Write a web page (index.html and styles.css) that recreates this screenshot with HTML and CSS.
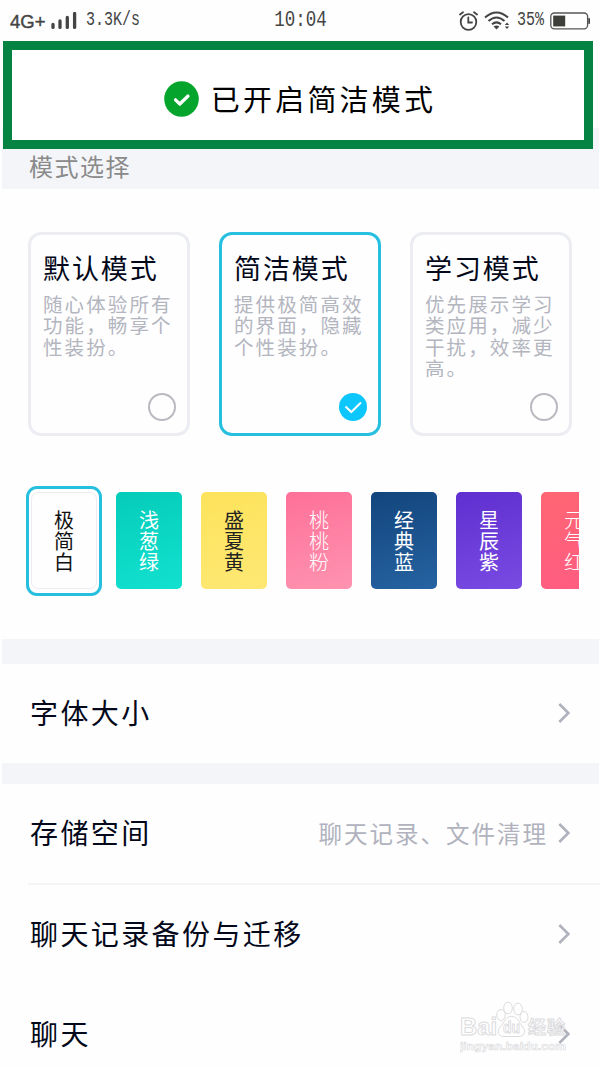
FILE: index.html
```html
<!DOCTYPE html>
<html lang="zh-CN">
<head>
  <meta charset="UTF-8" />
  <meta name="viewport" content="width=device-width, initial-scale=1.0"/>
  <title>简洁模式</title>
  <link rel="stylesheet" href="styles.css">
</head>
<body>

  <header class="status">
    <div class="status-left">
      <span class="network">4G+</span>
      <svg class="signal" width="26" height="18" viewBox="0 0 26 18" fill="none" stroke="#444" stroke-width="3.3" stroke-linecap="round">
        <path d="M2 12.5V15.4M9 9V15.4M16.3 5.5V15.4M23.6 1.5V15.4"/>
      </svg>
      <span class="mono speed">3.3K/s</span>
    </div>
    <span class="mono clock">10:04</span>
    <div class="status-right">
      <svg width="19" height="20" viewBox="0 0 19 20" fill="none" stroke="#444" stroke-width="1.8" stroke-linecap="round">
        <circle cx="9.5" cy="11" r="7.8"/>
        <path d="M9.3 6.5V11.5H13M1 3.5L4 1.2M18 3.5L15 1.2"/>
      </svg>
      <svg class="wifi" width="26" height="19" viewBox="0 0 26 19" fill="none" stroke="#444" stroke-width="2.1">
        <path d="M1 6.5Q12.5-3.5 24 6.5M4.5 10Q12.5 3 20.5 10M8 13.2Q12.5 9.5 17 13.2"/>
        <path d="M9.6 15.6Q12.5 13.4 15.4 15.6L12.5 18.6Z" fill="#444" stroke="none"/>
        <path d="M20.8 14L23 11.4L25.2 14ZM20.8 15.5L23 18.1L25.2 15.5Z" fill="#444" stroke="none"/>
      </svg>
      <span class="mono percent">35%</span>
      <svg class="battery" width="41" height="18" viewBox="0 0 41 18">
        <rect x=".8" y="1" width="36.8" height="15.8" rx="3.5" fill="none" stroke="#555" stroke-width="1.3"/>
        <rect x="3.2" y="3.6" width="12" height="10.8" fill="#3e3e3a"/>
        <path d="M38.3 6H39Q40 6 40 7V11Q40 12 39 12H38.3Z" fill="#444"/>
      </svg>
    </div>
  </header>

  <div class="banner">
    <svg width="35" height="36" viewBox="0 0 35 36">
      <ellipse cx="17.5" cy="18" rx="17.3" ry="17.8" fill="#05a52d"/>
      <path d="M11.5 18.8L15.8 23L24 15" fill="none" stroke="#fff" stroke-width="3.2" stroke-linecap="round" stroke-linejoin="round"/>
    </svg>
    <span>已开启简洁模式</span>
  </div>

  <h2 class="section-title">模式选择</h2>

  <section class="modes">
    <div class="mode">
      <h3>默认模式</h3>
      <p>随心体验所有功能，畅享个性装扮。</p>
      <span class="radio"></span>
    </div>
    <div class="mode active">
      <h3>简洁模式</h3>
      <p>提供极简高效的界面，隐藏个性装扮。</p>
      <span class="radio">
        <svg width="28" height="28" viewBox="0 0 28 28" fill="none" stroke="#fff" stroke-width="2">
          <path d="M6.5 13.5L12.3 19L22 9.5"/>
        </svg>
      </span>
    </div>
    <div class="mode">
      <h3>学习模式</h3>
      <p>优先展示学习类应用，减少干扰，效率更高。</p>
      <span class="radio"></span>
    </div>
  </section>

  <section class="themes">
    <div class="theme white"><span>极简白</span></div>
    <div class="theme green"><span>浅葱绿</span></div>
    <div class="theme yellow"><span>盛夏黄</span></div>
    <div class="theme pink"><span>桃桃粉</span></div>
    <div class="theme blue"><span>经典蓝</span></div>
    <div class="theme purple"><span>星辰紫</span></div>
    <div class="theme red"><span>元气红</span></div>
  </section>

  <div class="divider"></div>

  <div class="row">
    <span class="label">字体大小</span>
    <svg class="arrow" width="12" height="20" viewBox="0 0 12 20"><path d="M1.3 1L10.3 10L1.3 19"/></svg>
  </div>

  <div class="divider small"></div>

  <div class="row line">
    <span class="label">存储空间</span>
    <span class="value">聊天记录、文件清理</span>
    <svg class="arrow" width="12" height="20" viewBox="0 0 12 20"><path d="M1.3 1L10.3 10L1.3 19"/></svg>
  </div>
  <div class="row">
    <span class="label">聊天记录备份与迁移</span>
    <svg class="arrow" width="12" height="20" viewBox="0 0 12 20"><path d="M1.3 1L10.3 10L1.3 19"/></svg>
  </div>
  <div class="row">
    <span class="label">聊天</span>
    <svg class="arrow" width="12" height="20" viewBox="0 0 12 20"><path d="M1.3 1L10.3 10L1.3 19"/></svg>
  </div>

  <svg class="watermark" width="112" height="56" viewBox="0 0 112 56">
    <g fill="#fff" stroke="#dcdcde" stroke-width="1">
      <text class="wm-name" x="0" y="34" textLength="37" lengthAdjust="spacingAndGlyphs">Bai</text>
      <ellipse cx="41" cy="14" rx="4.3" ry="5.5"/>
      <ellipse cx="48" cy="7" rx="4.3" ry="5.8"/>
      <ellipse cx="58" cy="8" rx="4.3" ry="5.8"/>
      <ellipse cx="64" cy="16" rx="4" ry="5.5"/>
      <path d="M51.5 15.5C58 15.5 58.500 21 62 25C67 30 64 36 58 35.500H45C38 36 36 30 41 25C45 21 45 15.500 51.500 15.500Z"/>
      <text class="wm-du" x="43" y="32" textLength="17" lengthAdjust="spacingAndGlyphs">du</text>
      <text class="wm-cn" x="68" y="32.500" textLength="37">经验</text>
      <text class="wm-url" x="0" y="49" textLength="106" lengthAdjust="spacingAndGlyphs">jingyan.baidu.com</text>
    </g>
  </svg>

</body>
</html>
```

FILE: styles.css
```css
* {
  box-sizing: border-box;
}
body {
  font-family: "Noto Sans CJK SC", sans-serif;
  background: #fefefe;
  color: #03081a;
  margin: 0;
  position: relative;
  height: 1066px;
  overflow: hidden;
}
svg {
  display: block;
  flex: none;
}
.status {
  display: grid;
  grid-template-columns: 1fr auto 1fr;
  align-items: center;
  height: 41px;
  padding: 0 9px 0 10px;
  color: #444;
}
.status-left,
.status-right {
  display: flex;
  align-items: center;
}
.status-right {
  justify-content: flex-end;
}
.network {
  font: 18.5px "Liberation Sans", sans-serif;
  -webkit-text-stroke: 0.4px #444;
  width: 41px;
  padding-top: 3px;
}
.mono {
  font-family: "Liberation Mono", monospace;
  line-height: 20px;
  transform: scaleY(1.3);
}
.speed {
  font-size: 15px;
  margin-left: 9px;
}
.clock {
  font-size: 17.5px;
  padding-bottom: 1px;
}
.percent {
  font-size: 15px;
  margin-left: 7px;
  margin-right: 6px;
}
.wifi {
  margin-left: 6px;
}
.banner {
  position: relative;
  display: flex;
  align-items: center;
  justify-content: center;
  gap: 12px;
  width: 590px;
  height: 108px;
  margin: 0 0 -21px 3px;
  padding: 8px 0 0 4px;
  border: 9px solid #048342;
  background: #fff;
  font-size: 29px;
  letter-spacing: 3.2px;
  color: #000;
}
.banner span {
  padding-bottom: 3px;
}
.section-title {
  height: 61px;
  margin: 0 1px 0 2px;
  padding: 21px 0 0 27px;
  background: #f4f5f9;
  font-size: 24px;
  font-weight: 400;
  line-height: 34px;
  letter-spacing: 1.5px;
  color: #8a8a8a;
}
.modes {
  display: flex;
  gap: 29px;
  padding: 43px 28px 0;
}
.mode {
  display: flex;
  flex-direction: column;
  width: 162px;
  height: 204px;
  padding: 14px 11px 12px 12px;
  border: 3px solid #ebedf2;
  border-radius: 13px;
}
.mode.active {
  border-color: #26bfe0;
}
.mode h3 {
  margin: 0;
  font-size: 27px;
  font-weight: 400;
  line-height: 38px;
  letter-spacing: 1.9px;
}
.mode p {
  margin: 6px 0 0;
  font-size: 19.5px;
  line-height: 21.3px;
  letter-spacing: 2.1px;
  color: #b3b5bf;
  width: 136px;
}
.radio {
  width: 28px;
  height: 28px;
  margin-top: auto;
  align-self: flex-end;
  border: 2px solid #b8bac0;
  border-radius: 50%;
}
.active .radio {
  border: none;
  background: #0dc6fb;
}
.themes {
  display: flex;
  gap: 19px;
  width: 579px;
  height: 147px;
  padding-left: 31px;
  margin-top: 56px;
  clip-path: inset(-10px 0 0 0);
}
.theme {
  flex: none;
  display: flex;
  align-items: center;
  justify-content: center;
  width: 66px;
  height: 97px;
  border-radius: 5px;
  color: #fff;
}
.theme span {
  width: 20px;
  font-size: 20px;
  line-height: 21px;
  word-break: break-all;
}
.white {
  position: relative;
  border: 1px solid #ececf0;
  border-radius: 7px;
  color: #111;
}
/* selection ring */
.white::before {
  content: "";
  position: absolute;
  inset: -7px -6px -8px;
  border: 3px solid #26bfe0;
  border-radius: 11px;
}
.green {
  background: linear-gradient(165deg, #05ccb9, #12e1d0);
}
.yellow {
  background: linear-gradient(165deg, #fde35b, #fee874);
  color: #222;
}
.pink {
  background: linear-gradient(165deg, #fe7098, #fe93b0);
}
.pink span,
.red span {
  font-weight: 300;
}
.blue {
  background: linear-gradient(165deg, #12457c, #2663a2);
}
.purple {
  background: linear-gradient(165deg, #602fd0, #794be2);
}
.red {
  background: linear-gradient(165deg, #ff6673, #ff5c82);
}
.divider {
  height: 25px;
  margin: 0 1px 0 2px;
  background: #f4f5f9;
}
.divider.small {
  height: 21px;
}
.row {
  display: flex;
  align-items: center;
  height: 100px;
  margin-left: 28px;
  padding: 0 30px 2px 2px;
}
.divider + .row {
  height: 99px;
}
.divider + .row.line {
  height: 101px;
}
.line {
  border-bottom: 2px solid #f4f4f6;
}
.label {
  font-size: 28px;
  letter-spacing: 2.4px;
  padding-bottom: 2px;
}
.value {
  margin-left: auto;
  font-size: 23.5px;
  letter-spacing: 2px;
  color: #b0b2bd;
}
.arrow {
  margin-left: auto;
  fill: none;
  stroke: #b0b2bd;
  stroke-width: 2.6;
}
.value + .arrow {
  margin-left: 10px;
}
.watermark {
  position: absolute;
  left: 460px;
  top: 1001px;
}
.watermark text {
  font-family: "Liberation Sans", "Noto Sans CJK SC", sans-serif;
  font-weight: bold;
}
.wm-name {
  font-size: 24px;
}
.wm-du {
  font-size: 16px;
}
.wm-cn {
  font-size: 18px;
}
.wm-url {
  font-size: 11px;
  stroke-width: 0.6;
}
```
